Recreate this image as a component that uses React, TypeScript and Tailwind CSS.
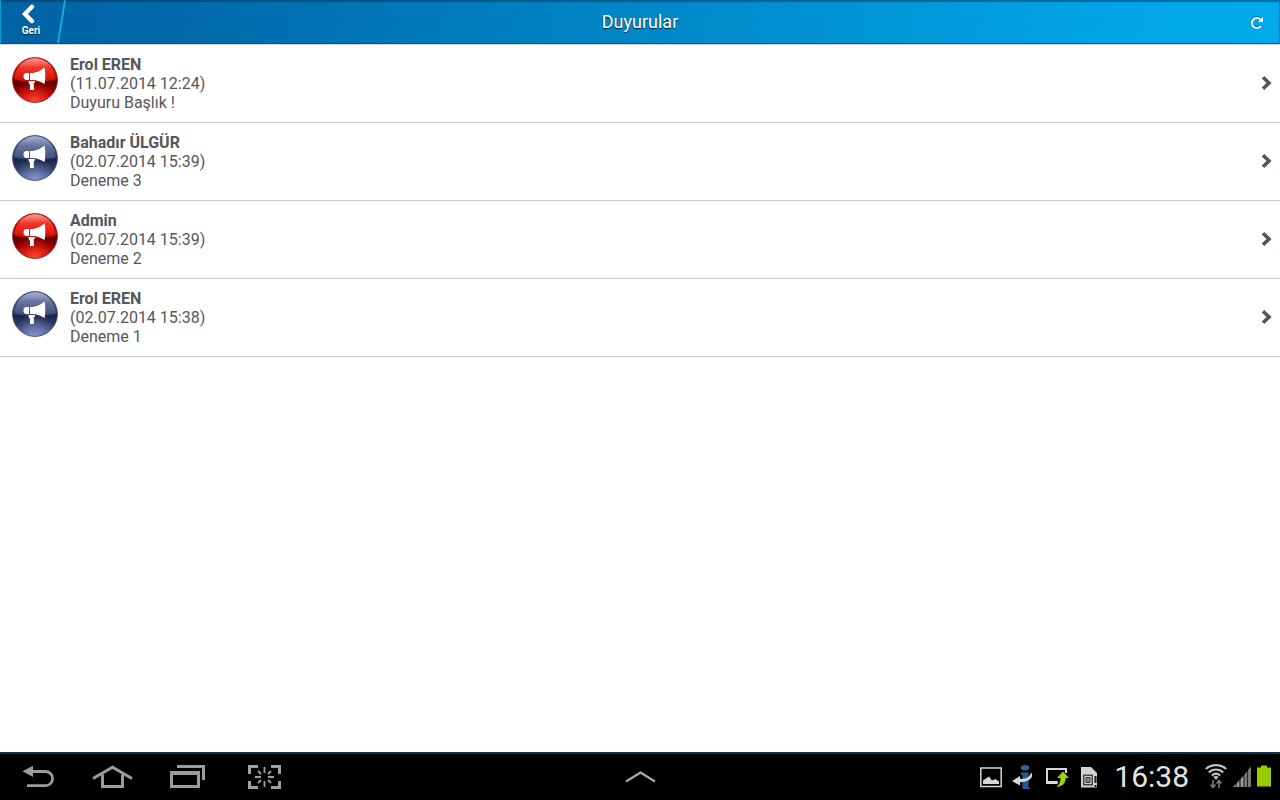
type Announcement = {
  id: number;
  author: string;
  date: string;
  title: string;
  unread: boolean;
};

const announcements: Announcement[] = [
  { id: 1, author: "Erol EREN", date: "11.07.2014 12:24", title: "Duyuru Başlık !", unread: true },
  { id: 2, author: "Bahadır ÜLGÜR", date: "02.07.2014 15:39", title: "Deneme 3", unread: false },
  { id: 3, author: "Admin", date: "02.07.2014 15:39", title: "Deneme 2", unread: true },
  { id: 4, author: "Erol EREN", date: "02.07.2014 15:38", title: "Deneme 1", unread: false },
];

function Gradients() {
  return (
    <svg width="0" height="0" className="absolute" aria-hidden="true">
      <defs>
        <linearGradient id="red-base" x1="0" y1="0" x2="0" y2="1">
          <stop offset="0" stopColor="#d40000" />
          <stop offset="0.44" stopColor="#b00800" />
          <stop offset="0.54" stopColor="#5c0000" />
          <stop offset="0.75" stopColor="#960000" />
          <stop offset="1" stopColor="#d80e04" />
        </linearGradient>
        <linearGradient id="red-gloss" x1="0" y1="0" x2="0" y2="1">
          <stop offset="0" stopColor="#ff9c94" />
          <stop offset="0.4" stopColor="#f0362a" />
          <stop offset="1" stopColor="#dc0c00" stopOpacity="0.9" />
        </linearGradient>
        <radialGradient id="red-glow" cx="0.5" cy="1" r="0.5">
          <stop offset="0" stopColor="#ff4a38" />
          <stop offset="1" stopColor="#ff2010" stopOpacity="0" />
        </radialGradient>
        <linearGradient id="blue-base" x1="0" y1="0" x2="0" y2="1">
          <stop offset="0" stopColor="#4d5c8a" />
          <stop offset="0.44" stopColor="#36446f" />
          <stop offset="0.54" stopColor="#1a2448" />
          <stop offset="0.75" stopColor="#2f3d68" />
          <stop offset="1" stopColor="#5d6fa3" />
        </linearGradient>
        <linearGradient id="blue-gloss" x1="0" y1="0" x2="0" y2="1">
          <stop offset="0" stopColor="#a9b3d4" />
          <stop offset="0.4" stopColor="#6975a0" />
          <stop offset="1" stopColor="#3f4d7a" stopOpacity="0.9" />
        </linearGradient>
        <radialGradient id="blue-glow" cx="0.5" cy="1" r="0.5">
          <stop offset="0" stopColor="#8496ca" />
          <stop offset="1" stopColor="#6d7fb5" stopOpacity="0" />
        </radialGradient>
      </defs>
    </svg>
  );
}

function MegaphoneBadge({ unread }: { unread: boolean }) {
  const color = unread ? "red" : "blue";
  return (
    <svg width="46" height="46" viewBox="0 0 46 46" className="shrink-0" aria-hidden="true">
      <circle cx="23" cy="23" r="22.4" fill={`url(#${color}-base)`} stroke={unread ? "#7c1410" : "#2b3763"} strokeWidth="0.8" />
      <circle cx="23" cy="23" r="22" fill={`url(#${color}-glow)`} />
      <path d="M2.5 22C3 10 12 1.2 23 1.2S43 10 43.500 22C37 25.500 9 25.500 2.500 22Z" fill={`url(#${color}-gloss)`} />
      <g fill="#fff">
        <path d="M17 16V23H14.500C12.500 23 11.500 21.500 11.500 19.500S12.500 16 14.500 16Z" />
        <path d="M18 16H21C25 15.500 29 13.500 32.500 10.500C33.500 14 33.500 23 32.500 27C29 25 25 23 21 23H18Z" />
        <path d="M16.500 24H22.800V26H21.800V33H18V27.500C17 27.300 16.500 26.500 16.500 24Z" />
      </g>
    </svg>
  );
}

function Header() {
  return (
    <header className="grid h-11 grid-cols-[1fr_auto_1fr] items-stretch border-r border-b border-l border-r-[#0878b8] border-b-[#07508c] border-l-[#00a0e0] bg-[linear-gradient(100deg,#0063a3_0%,#0069ab_14%,#0087c8_50%,#00a6e8_88%,#00aaeb_100%)] text-white shadow-[inset_0_2px_1px_rgba(0,50,90,0.5)]">
      <div className="flex">
        <button type="button" className="flex w-14 flex-col items-center pt-1 pl-1 text-[10px] leading-3 font-bold [text-shadow:0_1px_1px_rgba(0,0,0,0.6)]">
          <svg width="20" height="20" viewBox="0 0 20 20" className="-ml-1" aria-hidden="true">
            <path d="M13 2.800L6 10L13 17.200" fill="none" stroke="#003a66" strokeOpacity="0.5" strokeWidth="4.600" strokeLinecap="round" transform="translate(0 1)" />
            <path d="M13 2.800L6 10L13 17.200" fill="none" stroke="#fff" strokeWidth="4.400" strokeLinecap="round" />
          </svg>
          <span className="pt-px">Geri</span>
        </button>
        <svg width="10" height="43" viewBox="0 0 10 43" aria-hidden="true">
          <path d="M8 0.500L1 43" stroke="#14aee4" strokeWidth="1.800" />
        </svg>
      </div>
      <h1 className="self-center text-lg leading-6 [text-shadow:0_1px_1px_rgba(0,0,0,0.8)]">Duyurular</h1>
      <button type="button" aria-label="Yenile" className="flex w-11 items-center justify-center justify-self-end">
        <svg width="14" height="14" viewBox="0 0 14 14" aria-hidden="true">
          <g transform="translate(0 -1)" stroke="#063c5c" strokeOpacity="0.6" fill="none">
            <path d="M10.500 4.500A5 5 0 1 0 11 10.800" strokeWidth="1.800" />
          </g>
          <path d="M10.500 4.500A5 5 0 1 0 11 10.800" fill="none" stroke="#fff" strokeWidth="1.800" />
          <path d="M13 2V7H8Z" fill="#fff" />
        </svg>
      </button>
    </header>
  );
}

function AnnouncementRow({ item }: { item: Announcement }) {
  return (
    <li className="border-b border-[#c8c8c8]">
      <a href={`#duyuru-${item.id}`} className="flex items-start gap-3 py-[10px] pr-2 pl-3">
        <span className="pt-0.5">
          <MegaphoneBadge unread={item.unread} />
        </span>
        <div className="flex-1 leading-[19px]">
          <div className="font-bold">{item.author}</div>
          <div>({item.date})</div>
          <div>{item.title}</div>
        </div>
        <svg width="12" height="56" viewBox="0 0 12 56" aria-hidden="true">
          <path d="M3 22.300L9 28L3 33.700" fill="none" stroke="#51565c" strokeWidth="3.600" />
        </svg>
      </a>
    </li>
  );
}

function NavButtons() {
  return (
    <nav className="flex">
      <button type="button" aria-label="Geri">
        <svg width="75" height="46" viewBox="0 0 75 46" aria-hidden="true">
          <path d="M32 17.500H45.500a7 7 0 0 1 0 14.200H27" fill="none" stroke="#9c9c9c" strokeWidth="2.800" />
          <path d="M22.500 17.300L33 11.800V23Z" fill="#9c9c9c" />
        </svg>
      </button>
      <button type="button" aria-label="Ana ekran">
        <svg width="75" height="46" viewBox="0 0 75 46" fill="none" stroke="#9c9c9c" strokeWidth="3" aria-hidden="true">
          <path d="M18 24.500L37.500 13.200L57 24.500" />
          <path d="M27.500 20.500V32.500H47.500V20.500" />
        </svg>
      </button>
      <button type="button" aria-label="Son uygulamalar">
        <svg width="75" height="46" viewBox="0 0 75 46" fill="none" stroke="#9c9c9c" strokeWidth="3" aria-hidden="true">
          <path d="M20 17H50V34H20ZM23 21V31H47V21Z" fill="#9c9c9c" fillRule="evenodd" stroke="none" />
          <path d="M27 12.500H53.500V26" />
        </svg>
      </button>
      <button type="button" aria-label="Ekran görüntüsü">
        <svg width="75" height="46" viewBox="0 0 75 46" fill="none" stroke="#a0a0a0" strokeWidth="3" aria-hidden="true">
          <path d="M24.500 20V12.500H33M46 12.500H54.500V20M54.500 27V33.500H46M33 33.500H24.500V27" />
          <path d="M39.500 13V19M39.500 27V33M30 23H36M43 23H49" strokeWidth="1.800" />
          <path d="M33 17L36 20M46 17L43 20M33 29L36 26M46 29L43 26" strokeWidth="1.800" />
        </svg>
      </button>
    </nav>
  );
}

function StatusIcons() {
  return (
    <div className="flex items-center justify-end gap-4 pr-[9px]">
      <div className="flex gap-2.5">
        <svg width="22" height="26" viewBox="0 0 22 26" aria-hidden="true">
          <rect x="0.800" y="4" width="20.400" height="18.500" fill="none" stroke="#d8d8d8" strokeWidth="1.500" />
          <path d="M3 20V16.500L6 14.500L9 12.500L12 16.500L15.500 15L19 17.500V20Z" fill="#d8d8d8" />
        </svg>
        <svg width="22" height="26" viewBox="0 0 22 26" aria-hidden="true">
          <ellipse cx="13" cy="3.800" rx="4.300" ry="2.700" fill="#2b629c" />
          <path d="M9 8.500H16.500V23.500H18V25H10.500V11H9Z" fill="#235a92" />
          <path d="M0 17L8 12V14.800C14 15.500 18 13 19 8.500C22.500 12 18 18 8 18.200V21.500Z" fill="#d4d7de" />
        </svg>
        <svg width="26" height="26" viewBox="0 0 26 26" aria-hidden="true">
          <path d="M14 18.500H3V5H22V9" fill="none" stroke="#d8d8d8" strokeWidth="2" />
          <path d="M2 18.500H13" stroke="#d8d8d8" strokeWidth="3" />
          <path d="M19 7.500L25 14H21.800C21.800 19 18.500 22.500 12.500 23C15.500 20.500 16.500 18 16.500 14H13Z" fill="#99d30a" />
        </svg>
        <svg width="18" height="26" viewBox="0 0 18 26" aria-hidden="true">
          <path d="M1 3H11L17 9V23.500H1Z" fill="#d2d2d2" />
          <path d="M3 10.500H13V21.500H3Z" fill="#444" />
          <path d="M4.500 12H11.500V20H4.500Z" fill="#d2d2d2" />
          <path d="M6 13.500H10V18.500H6Z" fill="#8b8b8b" stroke="#333" strokeWidth="1" />
          <path d="M15.500 12V19M15.500 21V23" stroke="#1b1b1b" strokeWidth="2" />
        </svg>
      </div>
      <time className="text-[30px] leading-none text-[#e4e4e4]">16:38</time>
      <div className="flex gap-1.5">
        <svg width="22" height="26" viewBox="0 0 22 26" fill="none" stroke="#bdbdbd" strokeWidth="2.200" aria-hidden="true">
          <path d="M0.800 5C6.500 -0.200 15.500 -0.200 21.200 5" />
          <path d="M3.800 8.500C8 4.500 14 4.500 18.200 8.500" />
          <path d="M6.800 11.500C9.500 9 12.500 9 15.200 11.500" />
          <path d="M8.200 12.800Q11 11 13.800 12.800L11 16Z" fill="#bdbdbd" stroke="none" />
          <path d="M8 16V23M5.500 20.500L8 23.500L10.500 20.500M14 24V17M11.500 19.500L14 16.500L16.500 19.500" stroke="#777" strokeWidth="1.600" />
        </svg>
        <svg width="18" height="26" viewBox="0 0 18 26" aria-hidden="true">
          <path d="M0 23L3 20V23ZM3.500 23V19.500L6.500 16V23ZM7.500 23V15L10.500 11.500V23Z" fill="#999" />
          <path d="M11.300 23V10.500L14.300 7V23ZM15 23V6L18 2.500V23Z" fill="#777" />
        </svg>
        <svg width="14" height="26" viewBox="0 0 14 26" aria-hidden="true">
          <path d="M4 1.500H10V3.500H14V22.500H0V3.500H4Z" fill="#99cc00" />
        </svg>
      </div>
    </div>
  );
}

function SystemBar() {
  return (
    <footer className="grid grid-cols-[1fr_auto_1fr] items-stretch border-t-2 border-[#0d3447] bg-black">
      <NavButtons />
      <button type="button" aria-label="Yukarı">
        <svg width="40" height="46" viewBox="0 0 40 46" aria-hidden="true">
          <path d="M6 27.500L20.500 18.500L35 27.500" fill="none" stroke="#aaa" strokeWidth="2.200" />
        </svg>
      </button>
      <StatusIcons />
    </footer>
  );
}

export default function App() {
  return (
    <div className="flex min-h-screen flex-col bg-white font-[Roboto,sans-serif] text-[#54575d]">
      <Gradients />
      <Header />
      <main className="flex-1 border-t border-[#d8d8d8]">
        <ul>
          {announcements.map((item) => (
            <AnnouncementRow key={item.id} item={item} />
          ))}
        </ul>
      </main>
      <SystemBar />
    </div>
  );
}
